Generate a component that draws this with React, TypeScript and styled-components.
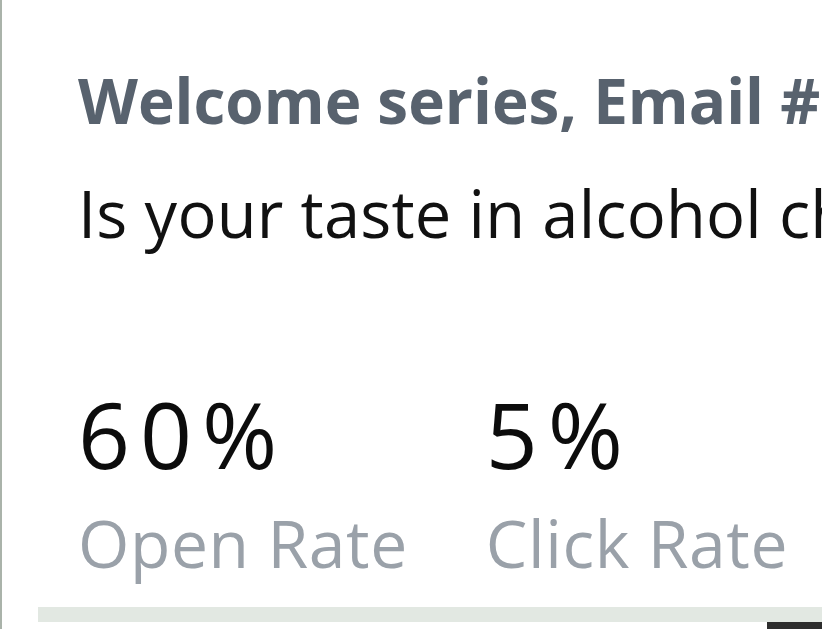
import { createGlobalStyle, styled } from "styled-components";

const GlobalStyle = createGlobalStyle`
  html, body {
    margin: 0;
    padding: 0;
    background: #ffffff;
  }
  body {
    font-family: "Open Sans", "Liberation Sans", sans-serif;
    overflow: hidden;
  }
`;

const stats = [
  { value: "60%", label: "Open Rate" },
  { value: "5%", label: "Click Rate" },
];

const App = () => {
  return (
    <>
      <GlobalStyle />
      <PageStyled>
        <CardStyled>
          <TitleStyled>Welcome series, Email #2</TitleStyled>
          <SubjectStyled>Is your taste in alcohol changing?</SubjectStyled>
          <StatsStyled>
            {stats.map((stat) => (
              <StatStyled key={stat.label}>
                <StatValueStyled>{stat.value}</StatValueStyled>
                <StatLabelStyled>{stat.label}</StatLabelStyled>
              </StatStyled>
            ))}
          </StatsStyled>
        </CardStyled>
        <FooterBarStyled />
        <BottomRowStyled>
          <DarkTabStyled />
        </BottomRowStyled>
      </PageStyled>
    </>
  );
};

const PageStyled = styled.div`
  width: 822px;
  height: 629px;
  box-sizing: border-box;
  border-left: 2px solid #aab3aa;
  overflow: hidden;
  display: flex;
  flex-direction: column;
`;

const CardStyled = styled.div`
  flex: 1;
  min-height: 0;
  padding: 62px 0 0 76px;
  white-space: nowrap;
  overflow: hidden;
`;

const TitleStyled = styled.div`
  font-size: 62px;
  font-weight: 700;
  line-height: 76px;
  color: #58626e;
`;

const SubjectStyled = styled.div`
  margin-top: 37px;
  font-size: 65px;
  font-weight: 400;
  line-height: 76px;
  color: #111111;
  letter-spacing: 0.2px;
`;

const StatsStyled = styled.div`
  margin-top: 135px;
  display: flex;
  gap: 78px;
`;

const StatStyled = styled.div`
  display: flex;
  flex-direction: column;
`;

const StatValueStyled = styled.div`
  font-size: 91px;
  font-weight: 400;
  line-height: 96px;
  color: #0c0c0c;
  letter-spacing: 10px;
`;

const StatLabelStyled = styled.div`
  margin-top: 22px;
  font-size: 66px;
  line-height: 76px;
  color: #9aa1a9;
  letter-spacing: 0.6px;
`;

const FooterBarStyled = styled.div`
  flex: none;
  margin-left: 36px;
  height: 15px;
  background: #e2e8e2;
`;

const BottomRowStyled = styled.div`
  flex: none;
  display: flex;
  justify-content: flex-end;
`;

const DarkTabStyled = styled.div`
  width: 55px;
  height: 7px;
  background: #2d2d2d;
`;

export default App;
